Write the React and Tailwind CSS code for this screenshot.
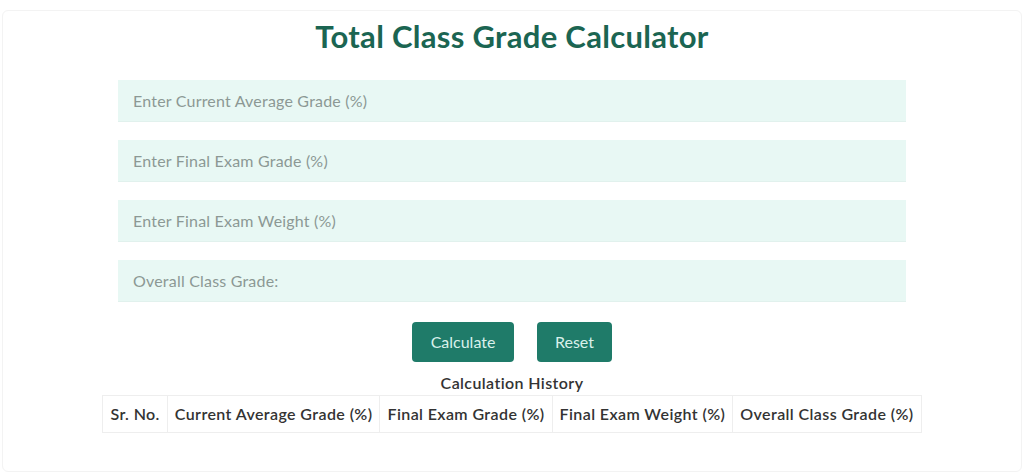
import React, { useState } from 'react';

const fields = [
  { key: 'current', label: 'Enter Current Average Grade (%)' },
  { key: 'exam', label: 'Enter Final Exam Grade (%)' },
  { key: 'weight', label: 'Enter Final Exam Weight (%)' },
];

const columns = [
  'Sr. No.',
  'Current Average Grade (%)',
  'Final Exam Grade (%)',
  'Final Exam Weight (%)',
  'Overall Class Grade (%)',
];

const App = () => {
  const [values, setValues] = useState({ current: '', exam: '', weight: '' });
  const [result, setResult] = useState('');
  const [history, setHistory] = useState([]);

  const calculate = () => {
    const c = parseFloat(values.current);
    const e = parseFloat(values.exam);
    const w = parseFloat(values.weight);
    if (isNaN(c) || isNaN(e) || isNaN(w)) return;
    const overall = (c * (100 - w) + e * w) / 100;
    setResult(overall.toFixed(2));
    setHistory(h => [...h, { c, e, w, overall: overall.toFixed(2) }]);
  };

  const reset = () => {
    setValues({ current: '', exam: '', weight: '' });
    setResult('');
  };

  const inputCls =
    "h-[42px] w-full bg-[#e8f8f4] border-b border-[#e1f1ed] px-[15px] text-[16px] tracking-[0.2px] text-[#3c4a46] placeholder-[#8c9894] outline-none";

  return (
    <div className="w-screen h-[474px] bg-white px-[2px] pt-[10px] font-['Lato',sans-serif]">
      <div className="h-[462px] border border-[#f3f3f3] rounded-md flex flex-col items-center">
        <h1 className="text-[31px] leading-[50px] font-bold text-[#1b6552] tracking-[0.3px]">
          Total Class Grade Calculator
        </h1>

        <div className="mt-[19px] w-[788px] flex flex-col gap-[18px]">
          {fields.map(f => (
            <input
              key={f.key}
              type="text"
              value={values[f.key]}
              onChange={ev => setValues({ ...values, [f.key]: ev.target.value })}
              placeholder={f.label}
              className={inputCls}
            />
          ))}
          <input
            type="text"
            readOnly
            value={result ? `Overall Class Grade: ${result}%` : ''}
            placeholder="Overall Class Grade:"
            className={inputCls}
          />
        </div>

        <div className="mt-[20px] flex gap-[23px]">
          <button
            onClick={calculate}
            className="h-[40px] w-[102px] rounded-[4px] bg-[#1f7b69] text-[#d9f1eb] text-[16px]"
          >
            Calculate
          </button>
          <button
            onClick={reset}
            className="h-[40px] w-[75px] rounded-[4px] bg-[#1f7b69] text-[#d9f1eb] text-[16px]"
          >
            Reset
          </button>
        </div>

        <div className="mt-[11px] text-[16px] leading-[20px] font-semibold tracking-[0.4px] text-[#333]">
          Calculation History
        </div>

        <table className="mt-[2px] border-collapse">
          <thead>
            <tr>
              {columns.map(c => (
                <th
                  key={c}
                  className="h-[37px] px-[7px] border border-[#eeeeee] text-[16px] font-semibold tracking-[0.4px] text-[#333] whitespace-nowrap"
                >
                  {c}
                </th>
              ))}
            </tr>
          </thead>
          <tbody>
            {history.map((row, i) => (
              <tr key={i}>
                <td className="px-[7px] py-2 border border-[#eeeeee] text-center text-[15px]">{i + 1}</td>
                <td className="px-[7px] py-2 border border-[#eeeeee] text-center text-[15px]">{row.c}</td>
                <td className="px-[7px] py-2 border border-[#eeeeee] text-center text-[15px]">{row.e}</td>
                <td className="px-[7px] py-2 border border-[#eeeeee] text-center text-[15px]">{row.w}</td>
                <td className="px-[7px] py-2 border border-[#eeeeee] text-center text-[15px]">{row.overall}</td>
              </tr>
            ))}
          </tbody>
        </table>
      </div>
    </div>
  );
};

export default App;
